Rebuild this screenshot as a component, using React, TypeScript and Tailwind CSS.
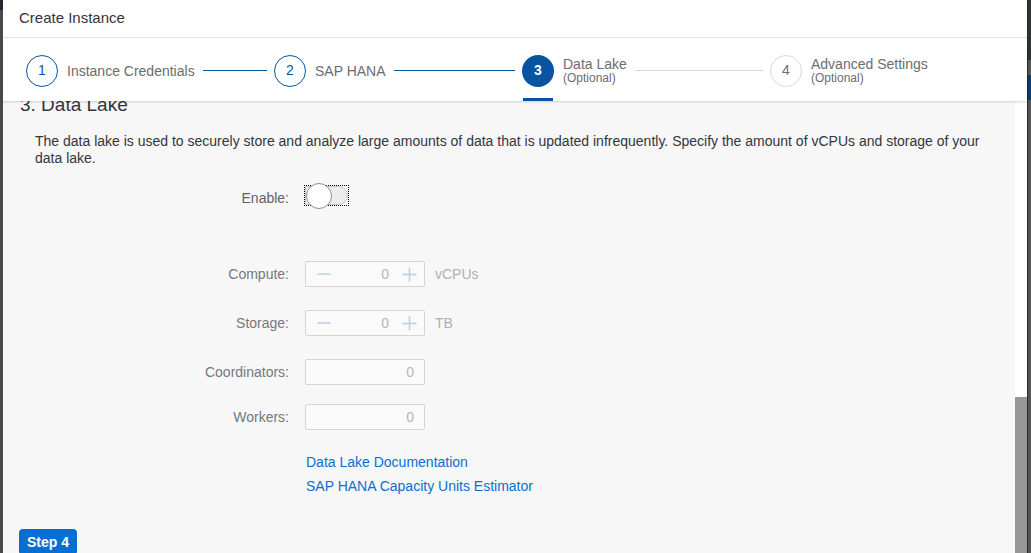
import React from "react";

const FONT = { fontFamily: '"Liberation Sans", Arial, sans-serif' };

function Minus() {
  return (
    <svg width="14" height="14" viewBox="0 0 14 14">
      <line x1="0.5" y1="7" x2="13.5" y2="7" stroke="#bfd1e5" strokeWidth="1.6" />
    </svg>
  );
}
function Plus() {
  return (
    <svg width="15" height="15" viewBox="0 0 15 15">
      <line x1="0.5" y1="7.5" x2="14.5" y2="7.5" stroke="#bfd1e5" strokeWidth="1.6" />
      <line x1="7.5" y1="0.5" x2="7.5" y2="14.5" stroke="#bfd1e5" strokeWidth="1.6" />
    </svg>
  );
}

function StepCircle({ n, state }: { n: number; state: "done" | "active" | "todo" }) {
  if (state === "active")
    return (
      <div className="w-[32px] h-[32px] shrink-0 rounded-full bg-[#0854a0] text-white font-bold text-[14px] flex items-center justify-center">
        {n}
      </div>
    );
  if (state === "done")
    return (
      <div className="w-[32px] h-[32px] shrink-0 rounded-full bg-white border border-[#0854a0] text-[#0854a0] text-[14px] flex items-center justify-center">
        {n}
      </div>
    );
  return (
    <div className="w-[32px] h-[32px] shrink-0 rounded-full bg-white border border-[#d9d9d9] text-[#6a6d70] text-[14px] flex items-center justify-center">
      {n}
    </div>
  );
}

function Step({
  n,
  title,
  optional,
  state,
  line,
}: {
  n: number;
  title: string;
  optional?: boolean;
  state: "done" | "active" | "todo";
  line?: "blue" | "grey";
}) {
  return (
    <div className="relative flex items-center h-full pt-[2px]">
      <StepCircle n={n} state={state} />
      <div className="ml-[9px] flex flex-col text-[#6a6d70] whitespace-nowrap">
        <span className="text-[14px] leading-[16px]">{title}</span>
        {optional && <span className="text-[12px] leading-[13px]">(Optional)</span>}
      </div>
      {line && (
        <div
          className={
            line === "blue"
              ? "flex-1 h-px bg-[#0854a0] ml-[8px] mr-[7px]"
              : "flex-1 h-px bg-[#d9d9d9] ml-[8px] mr-[7px]"
          }
        />
      )}
      {state === "active" && (
        <div className="absolute left-[1px] bottom-0 w-[30px] h-[3px] bg-[#0854a0]" />
      )}
    </div>
  );
}

function StepInput({ unit }: { unit: string }) {
  return (
    <div className="flex items-center">
      <div className="w-[120px] h-[26px] border border-[#d3d5d8] bg-[#fafafa] rounded-[2px] flex items-center pl-[11px] pr-[7px]">
        <Minus />
        <span className="flex-1 text-right text-[14px] text-[#b5b6b8] pr-[13px]">0</span>
        <Plus />
      </div>
      <span className="ml-[10px] text-[14px] text-[#aeb0b3]">{unit}</span>
    </div>
  );
}

function PlainInput() {
  return (
    <div className="w-[120px] h-[26px] border border-[#d3d5d8] bg-[#fafafa] rounded-[2px] flex items-center justify-end pr-[10px] text-[14px] text-[#b5b6b8]">
      0
    </div>
  );
}

function Row({ label, children, dark }: { label: string; children: React.ReactNode; dark?: boolean }) {
  return (
    <div className="flex items-center">
      <div
        className={
          dark
            ? "w-[286px] text-right text-[14px] text-[#5f6265]"
            : "w-[286px] text-right text-[14px] text-[#75787b]"
        }
      >
        {label}
      </div>
      <div className="ml-[16px]">{children}</div>
    </div>
  );
}

export default function App() {
  return (
    <div className="w-[1031px] h-[553px] flex overflow-hidden bg-[#444]" style={FONT}>
      {/* left backdrop strip */}
      <div className="w-[3px] h-full flex flex-col shrink-0">
        <div className="h-[10px] bg-[#232830]" />
        <div className="flex-1 bg-[#4a4a4a]" />
      </div>

      {/* dialog */}
      <div className="flex-1 flex flex-col h-full bg-white min-w-0">
        <div className="h-[38px] shrink-0 border-b border-[#e5e5e5] flex items-center pl-[16px] text-[15px] text-[#32363a]">
          Create Instance
        </div>

        <div className="relative z-10 h-[63px] shrink-0 bg-white shadow-[0_1px_2px_rgba(0,0,0,0.16)] pl-[23px] pr-[9px]">
          <div className="grid grid-cols-4 h-full">
            <Step n={1} title="Instance Credentials" state="done" line="blue" />
            <Step n={2} title="SAP HANA" state="done" line="blue" />
            <Step n={3} title="Data Lake" optional state="active" line="grey" />
            <Step n={4} title="Advanced Settings" optional state="todo" />
          </div>
        </div>

        <div className="flex-1 flex min-h-0">
          <div className="flex-1 bg-[#f7f7f7] overflow-hidden">
            <div className="mt-[-8px] pl-[17px] text-[19px] leading-[23px] text-[#32363a]">
              3. Data Lake
            </div>

            <p className="mt-[17px] pl-[32px] pr-[32px] text-[14px] leading-[17px] text-[#32363a]">
              The data lake is used to securely store and analyze large amounts of data that is updated
              infrequently. Specify the amount of vCPUs and storage of your data lake.
            </p>

            <div className="mt-[18px]">
              <Row label="Enable:" dark>
                <div className="relative w-[44px] h-[26px]">
                  <div className="absolute left-0 right-[1px] top-[1px] h-[19px] rounded-r-full bg-[#ededed] border border-[#c5c7c9]" />
                  <div className="absolute left-0 right-[1px] top-[1px] h-[19px] outline outline-1 outline-dotted outline-black" />
                  <div className="absolute left-[1px] top-[-2px] w-[26px] h-[26px] rounded-full bg-white border border-[#89919a]" />
                </div>
              </Row>
            </div>

            <div className="mt-[50px] flex flex-col gap-[23px]">
              <Row label="Compute:">
                <StepInput unit="vCPUs" />
              </Row>
              <Row label="Storage:">
                <StepInput unit="TB" />
              </Row>
              <Row label="Coordinators:">
                <PlainInput />
              </Row>
            </div>
            <div className="mt-[19px]">
              <Row label="Workers:">
                <PlainInput />
              </Row>
            </div>

            <div className="mt-[24px] pl-[303px] flex flex-col gap-[7px] text-[14px] leading-[17px] text-[#0a6ed1]">
              <span>Data Lake Documentation</span>
              <span>SAP HANA Capacity Units Estimator</span>
            </div>

            <div className="mt-[34px] pl-[16px]">
              <div className="w-[58px] h-[26px] rounded-[4px] bg-[#0a6ed1] text-white font-bold text-[14px] flex items-center justify-center">
                Step 4
              </div>
            </div>
          </div>

          {/* scrollbar */}
          <div className="w-[12px] shrink-0 flex flex-col">
            <div className="flex-1 bg-white" />
            <div className="h-[156px] bg-[#979797]" />
          </div>
        </div>
      </div>

      {/* right backdrop strip */}
      <div className="w-[4px] h-full flex flex-col shrink-0 border-l border-[#2a2a2a]">
        <div className="h-[60px] bg-[#2f3338]" />
        <div className="h-[15px] bg-[#555]" />
        <div className="h-[25px] bg-[#0d3a6b]" />
        <div className="flex-1 bg-[#555]" />
      </div>
    </div>
  );
}
